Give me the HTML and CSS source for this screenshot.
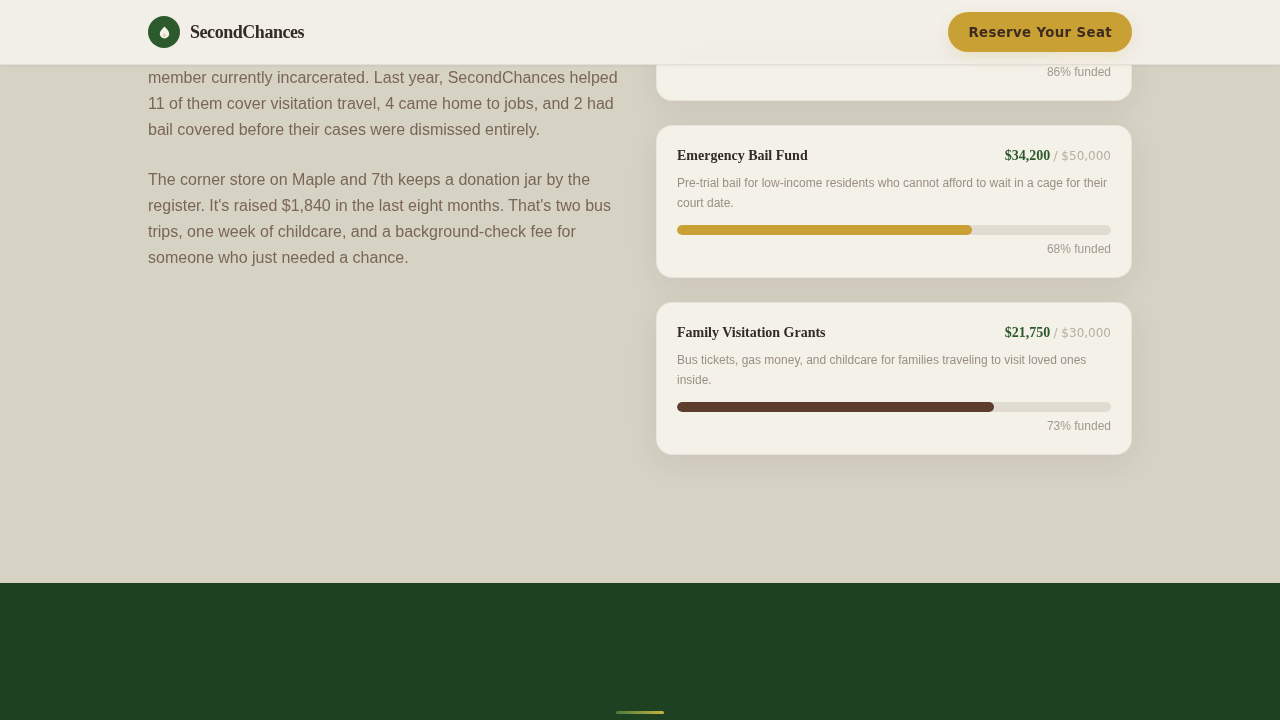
FILE: index.html
```html
<!DOCTYPE html>
<html lang="en">
<head>
<meta charset="utf-8">
<title>SecondChances</title>
<link rel="stylesheet" href="styles.css">
</head>
<body>
<header class="site-header">
  <a class="brand" href="#">
    <span class="brand-mark">
      <svg width="15" height="15" viewBox="0 0 14 14" aria-hidden="true">
        <path class="leaf" d="M7 1.500C9.100 3.600 11.400 5.800 11.400 8.200 11.400 10.700 9.400 12.500 7 12.500S2.600 10.700 2.600 8.200C2.600 5.800 4.900 3.600 7 1.500Z"/>
        <path class="leaf-core" d="M7 7.500C7.600 8.200 8 8.900 8 9.700 8 10.600 7.600 11.300 7 11.300S6 10.600 6 9.700C6 8.900 6.400 8.200 7 7.500Z"/>
      </svg>
    </span>
    <span class="brand-name">SecondChances</span>
  </a>
  <a class="cta" href="#">Reserve Your Seat</a>
</header>

<main class="impact">
  <div class="story">
    <p>member currently incarcerated. Last year, SecondChances helped 11 of them cover visitation travel, 4 came home to jobs, and 2 had bail covered before their cases were dismissed entirely.</p>
    <p>The corner store on Maple and 7th keeps a donation jar by the register. It's raised $1,840 in the last eight months. That's two bus trips, one week of childcare, and a background-check fee for someone who just needed a chance.</p>
  </div>
  <div class="funds">
    <article class="fund fund-first">
      <div class="track"><div class="fill fill-green" style="width:86%"></div></div>
      <div class="pct">86% funded</div>
    </article>
    <article class="fund">
      <div class="fund-head">
        <h3>Emergency Bail Fund</h3>
        <div class="amount"><strong>$34,200</strong> <span>/ $50,000</span></div>
      </div>
      <p class="desc">Pre-trial bail for low-income residents who cannot afford to wait in a cage for their court date.</p>
      <div class="track"><div class="fill fill-gold" style="width:68%"></div></div>
      <div class="pct">68% funded</div>
    </article>
    <article class="fund">
      <div class="fund-head">
        <h3>Family Visitation Grants</h3>
        <div class="amount"><strong>$21,750</strong> <span>/ $30,000</span></div>
      </div>
      <p class="desc">Bus tickets, gas money, and childcare for families traveling to visit loved ones inside.</p>
      <div class="track"><div class="fill fill-brown" style="width:73%"></div></div>
      <div class="pct">73% funded</div>
    </article>
  </div>
</main>

<footer class="site-footer">
  <div class="footer-rule"></div>
</footer>
</body>
</html>
```

FILE: styles.css
```css
* { box-sizing: border-box; }
html, body { margin: 0; height: 720px; overflow: hidden; }
body {
  background: #d6d2c4;
  font-family: "Liberation Sans", Arial, sans-serif;
  color: #2c2420;
}
.site-header {
  position: fixed;
  top: 0; left: 0; right: 0;
  z-index: 10;
  height: 65px;
  padding: 0 148px;
  display: flex;
  align-items: center;
  justify-content: space-between;
  background: rgba(243, 240, 233, 0.97);
  backdrop-filter: blur(12px);
  border-bottom: 1px solid rgba(44, 36, 32, 0.08);
  box-shadow: 0 1px 3px rgba(44, 36, 32, 0.06);
}
.brand { display: flex; align-items: center; gap: 10px; text-decoration: none; }
.brand-mark {
  width: 32px; height: 32px;
  border-radius: 50%;
  background: #2d5a2d;
  display: flex; align-items: center; justify-content: center;
}
.leaf { fill: #f4f1e9; }
.leaf-core { fill: #d9c9a0; }
.brand-name {
  font-family: "Liberation Serif", serif;
  font-weight: 700;
  font-size: 18px;
  letter-spacing: -0.45px;
  color: #332b26;
}
.cta {
  height: 40px;
  padding: 0 20px;
  display: flex; align-items: center;
  border-radius: 20px;
  background: #c9a033;
  color: #3d2b1f;
  font-family: "DejaVu Sans", sans-serif;
  font-weight: 700;
  font-size: 13.33px;
  letter-spacing: 0.36px;
  text-decoration: none;
  box-shadow: 0 4px 16px rgba(201, 160, 51, 0.2);
}
.impact {
  margin-top: -52px;
  padding: 0 148px 128px;
  display: grid;
  grid-template-columns: 476px 476px;
  gap: 32px;
}
.story { padding-top: 117px; font-size: 16px; line-height: 26px; color: #7a6656; will-change: transform; }
.story p { margin: 0 0 24px; }
.funds { display: flex; flex-direction: column; gap: 24px; }
.fund {
  height: 153px;
  padding: 20px;
  background: #f4f1e9;
  border: 1px solid rgba(44, 36, 32, 0.06);
  border-radius: 16px;
  box-shadow: 0 8px 32px rgba(61, 43, 31, 0.07);
  will-change: transform;
}
.fund-first { display: flex; flex-direction: column; justify-content: flex-end; }
.fund-head { display: flex; align-items: center; justify-content: space-between; height: 20px; margin-bottom: 7px; }
.fund-head h3 {
  margin: 0;
  font-family: "Liberation Serif", serif;
  font-size: 14px;
  font-weight: 700;
  color: #332b26;
}
.amount { font-size: 12px; }
.amount strong { font-family: "Liberation Serif", serif; font-size: 14px; color: #2d5a2d; }
.amount span { color: #b5aea3; font-family: "DejaVu Sans", sans-serif; font-size: 12px; }
.desc { margin: 0 0 12px; font-size: 12px; line-height: 20px; color: #9a8f85; }
.track { height: 10px; border-radius: 5px; background: #e0dcd2; overflow: hidden; }
.fill { height: 100%; border-radius: 5px; }
.fill-green { background: #2d5a2d; }
.fill-gold { background: #c9a033; }
.fill-brown { background: #5c3d2e; }
.pct { margin-top: 6px; text-align: right; font-size: 12px; line-height: 16px; color: #a29a8f; }
.site-footer { background: #1e4122; height: 300px; padding-top: 128px; }
.footer-rule {
  width: 48px; height: 3px;
  margin: 0 auto;
  border-radius: 2px;
  background: linear-gradient(90deg, #4a7c3f, #c9b040);
}
```
